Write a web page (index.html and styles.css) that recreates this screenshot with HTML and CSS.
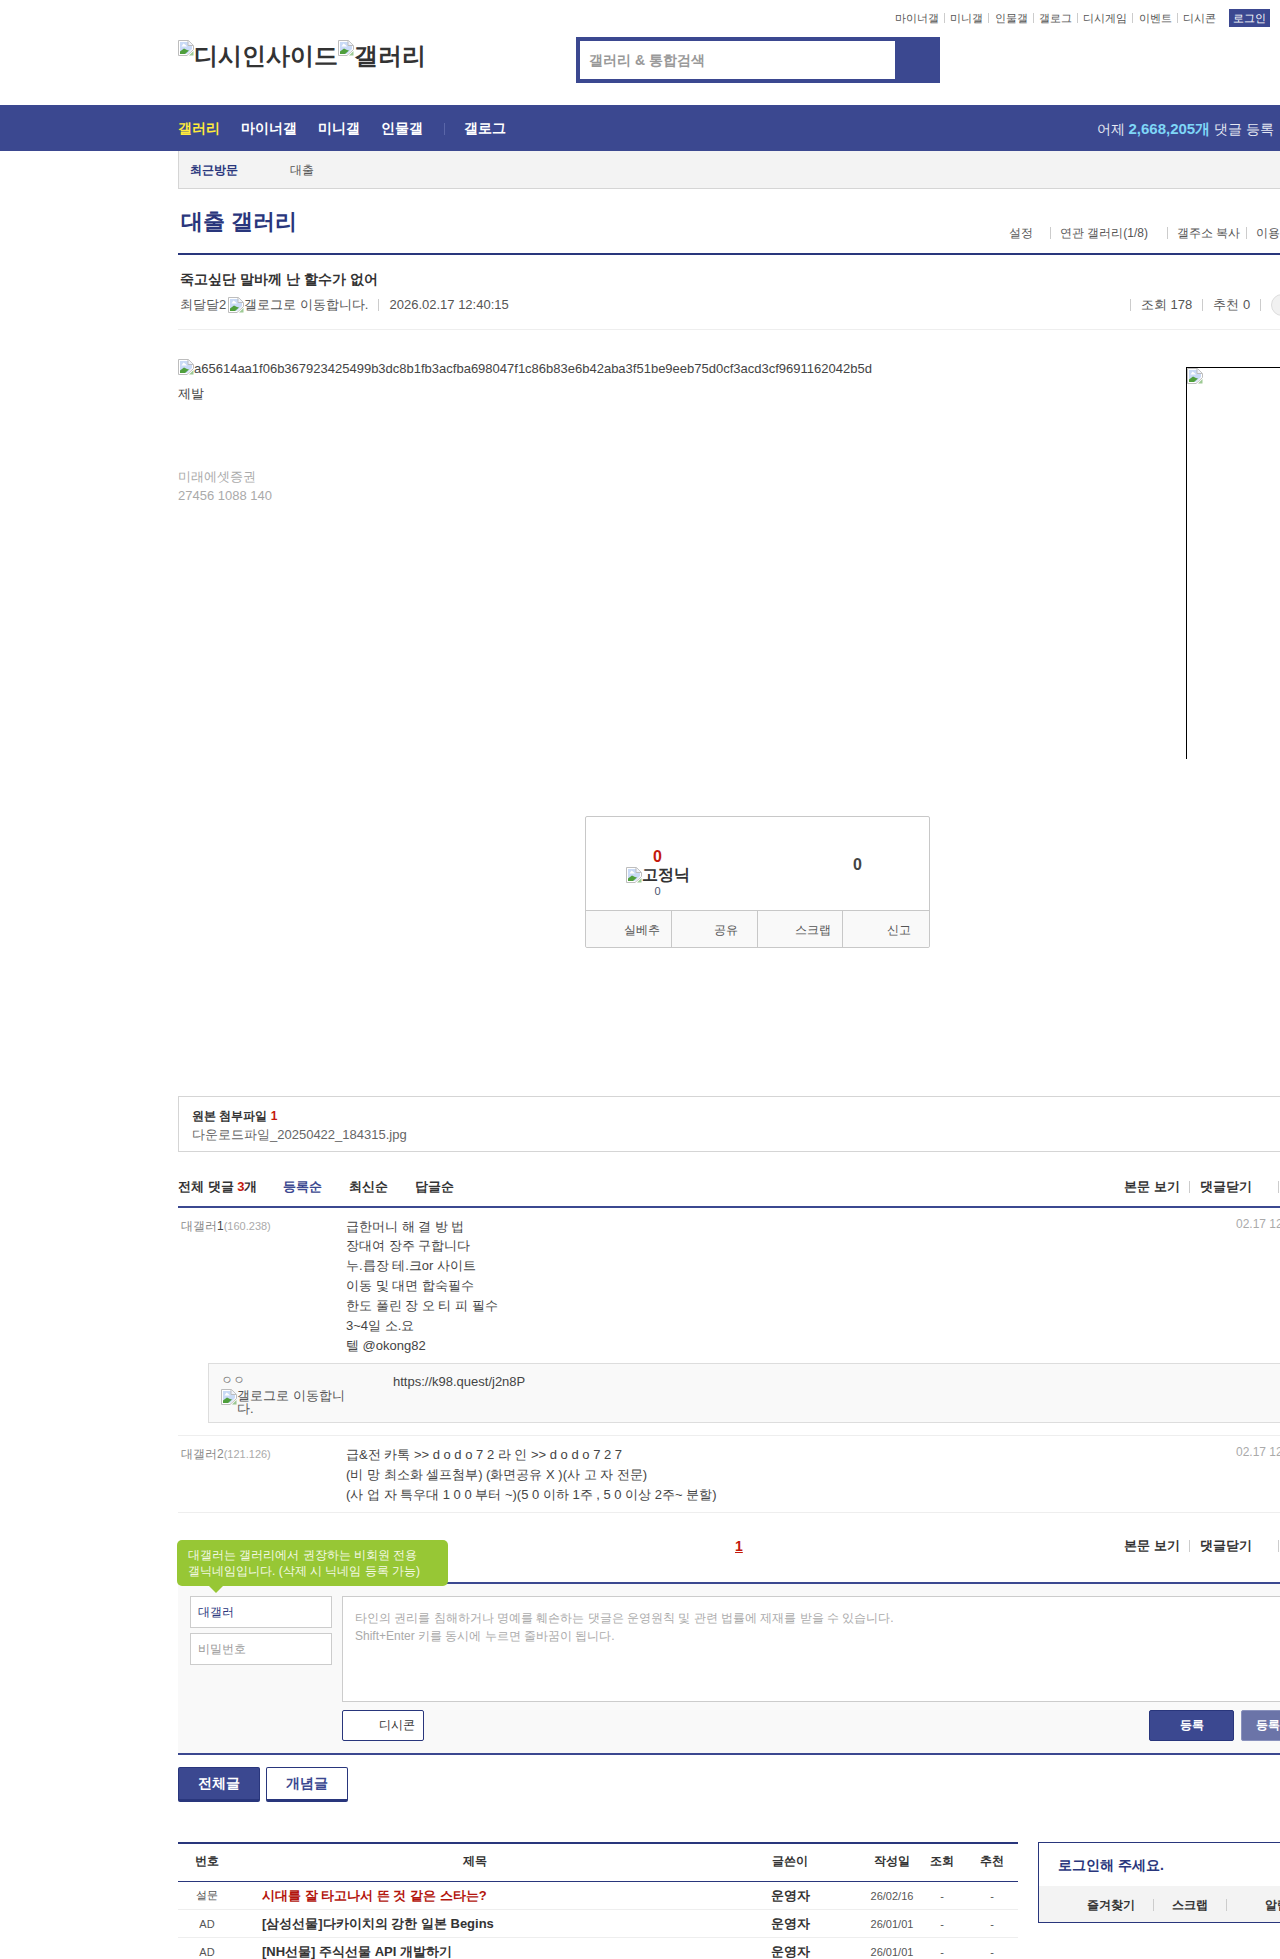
FILE: index.html
```html
<!DOCTYPE html>
<html lang="ko">
<head>
<meta charset="utf-8">
<title>대출 갤러리</title>
<link rel="stylesheet" href="styles.css">
</head>
<body>
<svg class="defs" width="0" height="0" aria-hidden="true">
  <symbol id="broken" viewBox="0 0 16 16">
    <path d="M.5.5h10l5 5v4L9 15.5H.5z" fill="#fff" stroke="#bdbdbd"/>
    <path d="M2 2h8v4h4v3l-5 5H2z" fill="#c9daf6"/>
    <path d="M3.5 6.5l2-3 2 1.500 1.500 1.500z" fill="#fff"/>
    <path d="M2 14v-2.500l4-3 3 1.500 2 .5-4 3.500z" fill="#4f9f3c"/>
    <path d="M10 .5v5h5" fill="#eef2fa" stroke="#bdbdbd"/>
    <path d="M11 15.500l4.500-4.500v4.500z" fill="#4f9f3c" opacity=".55"/>
  </symbol>
</svg>

<header class="top">
  <div class="util">
    <a>마이너갤</a><i class="sep"></i><a>미니갤</a><i class="sep"></i><a>인물갤</a><i class="sep"></i><a>갤로그</a><i class="sep"></i><a>디시게임</a><i class="sep"></i><a>이벤트</a><i class="sep"></i><a>디시콘</a>
    <a class="login">로그인</a>
  </div>
  <div class="mast">
    <div class="logo"><svg class="bi"><use href="#broken"/></svg><span>디시인사이드</span><svg class="bi"><use href="#broken"/></svg><span>갤러리</span></div>
    <div class="search"><div class="search-in">갤러리 &amp; 통합검색</div><div class="search-btn"></div></div>
  </div>
</header>

<nav class="gnb">
  <a class="on">갤러리</a><a>마이너갤</a><a>미니갤</a><a>인물갤</a><i class="gnb-sep"></i><a>갤로그</a>
  <p class="gnb-r">어제 <b>2,668,205개</b> 댓글 등록</p>
</nav>

<div class="recent"><b>최근방문</b><span>대출</span></div>

<main class="wrap">
  <div class="gtitle">
    <h1>대출 갤러리</h1>
    <div class="glinks"><a class="g0">설정</a><i class="sep"></i><a class="g1">연관 갤러리(1/8)</a><i class="sep"></i><a class="g3">갤주소 복사</a><i class="sep"></i><a>이용안내</a></div>
  </div>

  <section class="phead">
    <h2>죽고싶단 말바께 난 할수가 없어</h2>
    <div class="pmeta">
      <div class="pmeta-l"><span>최달달2</span><svg class="bi"><use href="#broken"/></svg><span>갤로그로 이동합니다.</span><i class="sep"></i><span>2026.02.17 12:40:15</span></div>
      <div class="pmeta-r"><i class="sep"></i><span>조회 178</span><i class="sep"></i><span>추천 0</span><i class="sep"></i><i class="circle"></i></div>
    </div>
  </section>

  <div class="pbody">
    <div class="pcol">
      <div class="altline"><svg class="bi"><use href="#broken"/></svg><span>a65614aa1f06b367923425499b3dc8b1fb3acfba698047f1c86b83e6b42aba3f51be9eeb75d0cf3acd3cf9691162042b5d</span></div>
      <p class="para">제발</p>
      <p class="sig">미래에셋증권<br>27456 1088 140</p>
      <div class="rec">
        <div class="rec-top">
          <div class="rec-a">
            <strong>0</strong>
            <div class="fix"><svg class="bi"><use href="#broken"/></svg><span>고정닉</span></div>
            <small>0</small>
          </div>
          <div class="rec-b">0</div>
        </div>
        <div class="rec-btns"><a class="p11">실베추</a><a class="p19">공유</a><a class="p11">스크랩</a><a class="p18">신고</a></div>
      </div>
    </div>
    <div class="adbox"><svg class="bi"><use href="#broken"/></svg></div>
  </div>

  <div class="files"><b>원본 첨부파일 <em>1</em></b><p>다운로드파일_20250422_184315.jpg</p></div>

  <div class="chead">
    <b class="ctotal">전체 댓글 <em>3</em>개</b><a class="act">등록순</a><a>최신순</a><a>답글순</a>
    <div class="cright"><a>본문 보기</a><i class="sep"></i><a>댓글닫기</a><i class="sep s2"></i></div>
  </div>

  <div class="cmt">
    <div class="cname">대갤러<b>1</b><small>(160.238)</small></div>
    <div class="ctext"><span class="l1">급한머니 해 결 방 법</span>장대여 장주 구합니다<br>누.릅장 테.크or 사이트<br>이동 및 대면 합숙필수<br>한도 풀린 장 오 티 피 필수<br>3~4일 소.요<br>텔 @okong82</div>
    <div class="cdate">02.17 12:41:08</div>
  </div>
  <div class="reply">
    <div class="rname">ㅇㅇ<div class="rgal"><svg class="bi"><use href="#broken"/></svg><span>갤로그로 이동합니다.</span></div></div>
    <div class="rtext">https://k98.quest/j2n8P</div>
    <div class="cdate">02.17 12:42:11</div>
  </div>
  <div class="cmt second">
    <div class="cname">대갤러2<small>(121.126)</small></div>
    <div class="ctext">급&amp;전 카톡 &gt;&gt; d o d o 7 2 라 인 &gt;&gt; d o d o 7 2 7<br>(비 망 최소화 셀프첨부) (화면공유 X )(사 고 자 전문)<br>(사 업 자 특우대 1 0 0 부터 ~)(5 0 이하 1주 , 5 0 이상 2주~ 분할)</div>
    <div class="cdate">02.17 12:43:27</div>
  </div>

  <div class="cpage">
    <a class="pnum">1</a>
    <div class="cright"><a>본문 보기</a><i class="sep"></i><a>댓글닫기</a><i class="sep s2"></i></div>
  </div>

  <form class="cform">
    <div class="tip">대갤러는 갤러리에서 권장하는 비회원 전용<br>갤닉네임입니다. (삭제 시 닉네임 등록 가능)</div>
    <div class="cf-l"><div class="inp nick">대갤러</div><div class="inp">비밀번호</div></div>
    <div class="cf-r">
      <div class="area">타인의 권리를 침해하거나 명예를 훼손하는 댓글은 운영원칙 및 관련 법률에 제재를 받을 수 있습니다.<br>Shift+Enter 키를 동시에 누르면 줄바꿈이 됩니다.</div>
      <div class="cf-btns"><a class="dc">디시콘</a><a class="sub">등록</a><a class="sub alt">등록+추천</a></div>
    </div>
  </form>

  <div class="tabs"><a class="tab on">전체글</a><a class="tab">개념글</a></div>

  <div class="lower">
    <div class="list">
      <div class="lrow lhead"><span>번호</span><span>제목</span><span>글쓴이</span><span>작성일</span><span>조회</span><span>추천</span></div>
      <div class="lrow"><span class="no">설문</span><a class="t red">시대를 잘 타고나서 뜬 것 같은 스타는?</a><b>운영자</b><span class="d">26/02/16</span><span class="d">-</span><span class="d">-</span></div>
      <div class="lrow"><span class="no">AD</span><a class="t">[삼성선물]다카이치의 강한 일본 Begins</a><b>운영자</b><span class="d">26/01/01</span><span class="d">-</span><span class="d">-</span></div>
      <div class="lrow"><span class="no">AD</span><a class="t">[NH선물] 주식선물 API 개발하기</a><b>운영자</b><span class="d">26/01/01</span><span class="d">-</span><span class="d">-</span></div>
    </div>
    <aside class="lbox">
      <h3>로그인해 주세요.</h3>
      <div class="lstrip"><a>즐겨찾기</a><i class="sep"></i><a>스크랩</a><i class="sep"></i><a class="far">알림</a></div>
    </aside>
  </div>
</main>
</body>
</html>
```
FILE: styles.css
```css
html, body { margin: 0; padding: 0; height: 1959px; overflow: hidden; }
body { background: #fff; color: #333; font-family: "Liberation Sans", sans-serif; font-size: 13px; white-space: nowrap; }
a { color: inherit; text-decoration: none; }
i, em { font-style: normal; }
h1, h2, h3, p { margin: 0; }
.defs { position: absolute; }
.bi { width: 16px; height: 16px; display: block; flex: none; }
.sep { display: block; width: 1px; height: 12px; background: #ccc; flex: none; }

.top { height: 105px; }
.util { display: flex; justify-content: flex-end; align-items: center; gap: 5px; height: 18px; padding: 9px 10px 0 0; font-size: 11px; color: #555; }
.util .sep { height: 10px; margin: 0 .2px; }
.login { margin-left: 8px; width: 41px; height: 18px; line-height: 18px; text-align: center; background: #3b4890; color: #fff; }
.mast { display: flex; margin: 10px 0 0 178px; height: 46px; }
.logo { display: flex; width: 398px; padding-top: 3px; height: 30px; font-size: 24px; line-height: 32px; color: #333; font-weight: bold; }
.search { display: flex; width: 364px; height: 46px; box-sizing: border-box; border: 4px solid #3b4890; }
.search-in { width: 315px; line-height: 38px; padding-left: 9px; box-sizing: border-box; font-size: 14px; color: #999; font-weight: bold; }
.search-btn { flex: 1; background: #3b4890; }

.gnb { display: flex; align-items: center; height: 46px; box-sizing: border-box; padding: 2px 6px 0 178px; gap: 21px; background: #3b4890; color: #fff; font-size: 14px; font-weight: bold; }
.gnb .on { color: #ffeb3b; }
.gnb-sep { width: 1px; height: 12px; background: #5a66a8; margin-right: -2px; }
.gnb-r { margin-left: auto; font-weight: normal; color: #e6e8f3; }
.gnb-r b { color: #7fd6f7; font-size: 15px; }

.recent { display: flex; align-items: center; height: 36px; margin-left: 178px; padding: 1px 0 0 11px; background: #f3f3f3; border-left: 1px solid #d5d5d5; border-bottom: 1px solid #d5d5d5; font-size: 12px; line-height: 16px; }
.recent b { color: #29367c; width: 100px; }
.recent span { color: #555; }

.wrap { margin-left: 178px; width: 1180px; }
.gtitle { display: flex; align-items: flex-start; height: 64px; border-bottom: 2px solid #29367c; }
.gtitle h1 { width: 828px; margin: 20px 0 0 3px; font-size: 22px; line-height: 26px; color: #29367c; }
.glinks { display: flex; align-items: center; margin-top: 36px; font-size: 12px; line-height: 16px; color: #555; }
.glinks .sep { margin: 0 9px; }
.g0 { margin-right: 8px; }
.g1 { margin-right: 10px; }
.g3 { margin-right: -3px; }

.phead { padding-bottom: 16px; border-bottom: 1px solid #eee; }
.phead h2 { margin: 15px 0 0 2px; font-size: 14px; line-height: 18px; color: #333; }
.pmeta { display: flex; height: 16px; margin-top: 9px; line-height: 16px; color: #555; }
.pmeta-l { display: flex; align-items: center; width: 942px; padding-left: 2px; box-sizing: border-box; }
.pmeta-l svg { margin-left: 2px; }
.pmeta-l .sep { margin: 0 10px; }
.pmeta-r { display: flex; align-items: center; }
.pmeta-r .sep { margin: 0 10px; }
.circle { width: 22px; height: 22px; border-radius: 50%; background: #f1f1f1; border: 1px solid #ddd; box-sizing: border-box; flex: none; }

.pbody { display: flex; }
.pcol { width: 1008px; flex: none; }
.altline { display: flex; margin-top: 29px; line-height: 20px; height: 16px; color: #444; }
.para { margin-top: 9px; line-height: 20px; color: #444; }
.sig { margin-top: 63px; line-height: 19px; color: #aaa; }
.adbox { margin-top: 37px; height: 392px; width: 300px; border-left: 1px solid #000; border-top: 1px solid #000; box-sizing: border-box; }

.rec { width: 345px; height: 132px; margin: 311px 0 0 407px; box-sizing: border-box; border: 1px solid #c8c8c8; border-radius: 2px; }
.rec-top { display: flex; height: 93px; }
.rec-a { width: 143px; padding-top: 31px; text-align: center; }
.rec-a strong { display: block; font-size: 16px; line-height: 18px; color: #c4190c; }
.fix { display: flex; justify-content: center; align-items: center; height: 18px; font-size: 16px; font-weight: bold; }
.rec-a small { display: block; margin-top: 1px; font-size: 11px; line-height: 12px; color: #4a5470; }
.rec-b { width: 143px; margin-left: 57px; padding-top: 39px; text-align: center; font-size: 16px; line-height: 18px; font-weight: bold; color: #444; }
.rec-btns { display: grid; grid-template-columns: repeat(4, 1fr); height: 37px; box-sizing: border-box; border-top: 1px solid #c8c8c8; background: #f9f9f9; border-radius: 0 0 2px 2px; }
.rec-btns a { text-align: right; padding-top: 2px; line-height: 34px; font-size: 12px; color: #555; border-right: 1px solid #c8c8c8; }
.rec-btns a:last-child { border-right: 0; }
.p11 { padding-right: 11px; }
.p19 { padding-right: 19px; }
.p18 { padding-right: 18px; }

.files { margin-top: 148px; height: 56px; box-sizing: border-box; padding: 10px 13px; border: 1px solid #d5d5d5; line-height: 18px; }
.files b { font-size: 12px; }
.files p { margin-top: 1px; color: #666; }
.files em, .ctotal em { color: #c4190c; }

.chead { display: flex; align-items: center; height: 38px; padding-top: 16px; border-bottom: 2px solid #3b4890; font-weight: bold; }
.ctotal { width: 105px; }
.chead > a { width: 66px; }
.chead .act { color: #3b4890; }
.cright { display: flex; align-items: center; }
.chead .cright { margin-left: 643px; }
.cright .sep { margin: 0 10px 0 9px; }
.cright .s2 { margin-left: 26px; }

.cmt { display: grid; grid-template-columns: 168px 890px 122px; padding-top: 9px; }
.cname { padding-left: 3px; line-height: 18px; font-size: 12px; color: #888; }
.cname b { color: #444; font-weight: normal; }
.cname small { font-size: 11px; color: #aaa; }
.ctext { line-height: 20px; color: #444; }
.l1 { display: block; line-height: 19px; }
.cdate { font-size: 12px; line-height: 14px; color: #aaa; }
.cmt:not(.second) .ctext { padding-bottom: 1px; }
.reply { display: grid; grid-template-columns: 124px 852px 100px; column-gap: 48px; margin: 6px 0 12px 30px; height: 60px; box-sizing: border-box; padding: 9px 0 0 12px; background: #f9f9f9; border: 1px solid #ddd; }
.rname { font-size: 12px; line-height: 14px; color: #777; }
.rgal { display: flex; margin-top: 2px; line-height: 13px; font-size: 13px; color: #555; white-space: normal; }
.rtext { line-height: 18px; color: #444; }
.reply .cdate { margin-top: 1px; }
.second { border-top: 1px solid #eee; padding-bottom: 7px; border-bottom: 1px solid #eee; }

.cpage { display: flex; align-items: center; height: 69px; border-bottom: 2px solid #3b4890; font-weight: bold; }
.pnum { margin: -4px 0 0 557px; width: 389px; color: #c4190c; font-size: 14px; text-decoration: underline; }
.cpage .cright { margin-top: -4px; }

.cform { position: relative; display: flex; height: 171px; box-sizing: border-box; padding: 12px 0 0 12px; background: #f9f9f9; border-bottom: 2px solid #3b4890; }
.tip { position: absolute; left: -1px; top: -44px; width: 271px; height: 46px; box-sizing: border-box; padding: 7px 11px; background: #97c735; color: #f4f9e6; border-radius: 5px; font-size: 12px; line-height: 16px; }
.tip::after { content: ""; position: absolute; left: 32px; top: 46px; border: 7px solid transparent; border-top-color: #97c735; border-bottom: 0; }
.cf-l { width: 142px; flex: none; }
.inp { height: 32px; box-sizing: border-box; margin-bottom: 5px; padding-left: 7px; line-height: 30px; background: #fff; border: 1px solid #ccc; font-size: 12px; color: #999; }
.nick { color: #29367c; }
.cf-r { margin-left: 10px; width: 1016px; flex: none; }
.area { height: 106px; box-sizing: border-box; padding: 12px; background: #fff; border: 1px solid #ccc; font-size: 12px; line-height: 18px; color: #aaa; }
.cf-btns { display: flex; margin-top: 8px; height: 31px; font-size: 12px; }
.cf-btns a { box-sizing: border-box; line-height: 29px; border-radius: 2px; }
.dc { width: 82px; padding-right: 8px; text-align: right; background: #fff; border: 1px solid #29367c; color: #333; }
.sub { width: 85px; margin-left: 725px; text-align: center; background: #3b4890; color: #fff; font-weight: bold; border: 1px solid #29367c; }
.alt { margin-left: 7px; background: #6b74a8; border-color: #8a92bd; }

.tabs { display: flex; gap: 6px; margin-top: 12px; height: 35px; font-size: 14px; font-weight: bold; }
.tab { width: 82px; height: 35px; box-sizing: border-box; line-height: 30px; text-align: center; border: 1px solid #29367c; border-bottom-width: 3px; border-radius: 2px; color: #3b4890; }
.tab.on { background: #3b4890; color: #fff; }

.lower { display: flex; margin-top: 40px; }
.list { width: 840px; flex: none; border-top: 2px solid #29367c; }
.lrow { display: grid; grid-template-columns: 58px 478px 152px 52px 48px 52px; align-items: center; height: 28px; box-sizing: border-box; border-bottom: 1px solid #eee; text-align: center; }
.lhead { height: 38px; padding-bottom: 2px; border-bottom: 1px solid #29367c; font-size: 12px; font-weight: bold; }
.no { font-size: 11px; color: #555; }
.t { text-align: left; padding-left: 26px; font-weight: bold; }
.red { color: #b3140c; }
.d { font-size: 11px; color: #555; }
.lbox { margin-left: 20px; width: 320px; height: 81px; box-sizing: border-box; border: 1px solid #29367c; }
.lbox h3 { height: 43px; padding: 2px 0 0 19px; box-sizing: border-box; line-height: 41px; font-size: 14px; color: #29367c; }
.lstrip { display: flex; align-items: center; height: 36px; padding: 2px 0 0 48px; box-sizing: border-box; background: #f3f3f3; font-size: 12px; font-weight: bold; }
.lstrip .sep { margin: 0 18px; }
.far { margin-left: 20px; }
```
